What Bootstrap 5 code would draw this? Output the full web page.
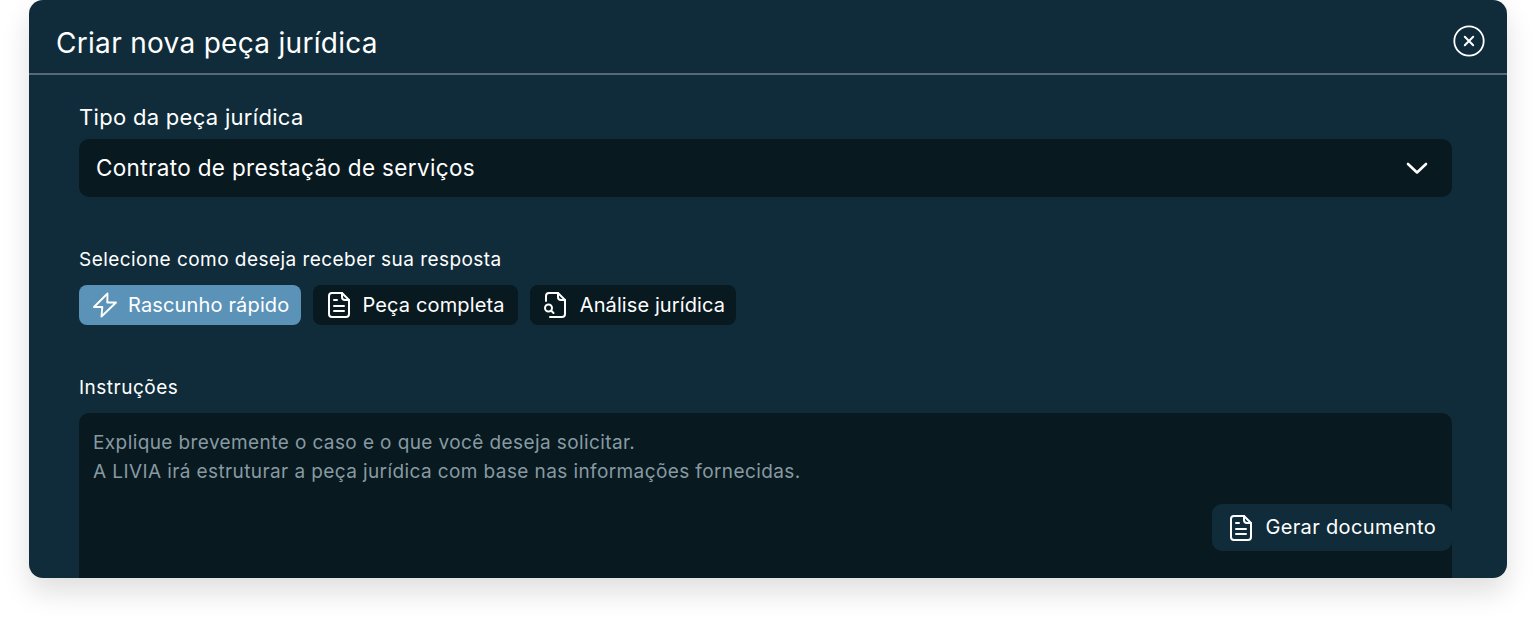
<!DOCTYPE html>
<html lang="pt-BR">
<head>
<meta charset="utf-8">
<title>Criar nova peça jurídica</title>
<link href="https://cdn.jsdelivr.net/npm/bootstrap@5.3.0/dist/css/bootstrap.min.css" rel="stylesheet">
<style>
html,body{height:636px;overflow:hidden;background:#fff;}
body{font-family:Inter,"Liberation Sans",sans-serif;padding:0 29px;}
.sheet{height:578px;background:#102c3a;border-radius:14px;color:#fff;overflow:hidden;box-shadow:0 14px 28px rgba(0,0,0,.13);}
.sheet-head{height:75px;flex:none;padding:14px 22px 0 27px;border-bottom:2px solid #56697a;}
.sheet-title{font-size:28px;font-weight:400;margin:0;letter-spacing:.3px;}
.closer{width:32px;height:32px;padding:0;background:none;border:0;display:block;margin-bottom:6px;}
.sheet-main{padding:0 55px 0 50px;}
.lbl-a{font-size:22px;letter-spacing:.3px;line-height:28px;margin:28px 0 8px;}
.picker{height:58px;background:#08191f;border-radius:10px;padding:0 24px 0 17px;font-size:22.5px;letter-spacing:.34px;}
.lbl-b{font-size:19px;letter-spacing:.45px;line-height:24px;margin:51px 0 13px;}
.chips{gap:11.5px;}
.chip{height:40px;border-radius:8px;background:#08191f;border:0;color:#fff;font-size:20px;letter-spacing:.15px;padding:0 12px 0 13px;gap:10px;}
.chip.on{background:#5b92b7;}
.chip-b{padding:0 13.5px 0 14px;gap:11.5px;}
.chip-c{gap:13px;padding-right:11px;letter-spacing:.1px;}
.lbl-c{font-size:19px;letter-spacing:.5px;line-height:24px;margin:51px 0 13px;}
.notes{height:200px;background:#08191f;border-radius:10px 10px 0 0;padding:15px 14px;font-size:19px;letter-spacing:.4px;line-height:29px;color:#879aa3;}
.gen{right:0;top:91px;height:47px;background:#102c3a;border:0;border-radius:10px;color:#fff;font-size:20px;letter-spacing:.35px;padding:0 16px 0 17px;gap:12px;}
</style>
</head>
<body>
<div class="sheet d-flex flex-column">
  <div class="sheet-head d-flex align-items-center justify-content-between">
    <h1 class="sheet-title">Criar nova peça jurídica</h1>
    <button class="closer" aria-label="Fechar"><svg width="32" height="32" viewBox="0 0 32 32" fill="none" stroke="#fff"><circle cx="16" cy="16" r="14.7" stroke-width="1.8"/><path d="M11.800 11.800l8.400 8.400M20.200 11.800l-8.400 8.400" stroke-width="2" stroke-linecap="round"/></svg></button>
  </div>
  <div class="sheet-main">
    <div class="lbl-a">Tipo da peça jurídica</div>
    <div class="picker d-flex align-items-center justify-content-between">
      <span>Contrato de prestação de serviços</span>
      <svg width="22" height="14" viewBox="0 0 22 14" fill="none" stroke="#fff" stroke-width="2.6" stroke-linecap="round" stroke-linejoin="round"><path d="M2 3l9 8.500L20 3"/></svg>
    </div>
    <div class="lbl-b">Selecione como deseja receber sua resposta</div>
    <div class="d-flex chips">
      <button class="chip on d-flex align-items-center">
        <svg width="26" height="26" viewBox="0 0 26 26" fill="none" stroke="#fff" stroke-width="1.9" stroke-linejoin="round"><path d="M15.500 1.500L2 15h8.300L9.500 24.500 24 10.500h-8.700z"/></svg>
        Rascunho rápido</button>
      <button class="chip chip-b d-flex align-items-center">
        <svg width="24" height="28" viewBox="0 0 24 28" fill="none" stroke="#fff" stroke-width="2" stroke-linecap="round" stroke-linejoin="round"><path d="M15 2H5a3 3 0 0 0-3 3v18a3 3 0 0 0 3 3h14a3 3 0 0 0 3-3V9z"/><path d="M15 2v4a3 3 0 0 0 3 3h4M7 9h3M7 15h10M7 20h10"/></svg>
        Peça completa</button>
      <button class="chip chip-c d-flex align-items-center">
        <svg width="24" height="28" viewBox="0 0 24 28" fill="none" stroke="#fff" stroke-width="2" stroke-linecap="round" stroke-linejoin="round"><path d="M3 10V5a3 3 0 0 1 3-3h9l7 7v14a3 3 0 0 1-3 3H7"/><path d="M15 2v4a3 3 0 0 0 3 3h4"/><circle cx="5.500" cy="17" r="3.500"/><path d="M8.300 19.800l2.200 2.200"/></svg>
        Análise jurídica</button>
    </div>
    <div class="lbl-c">Instruções</div>
    <div class="notes position-relative">
      Explique brevemente o caso e o que você deseja solicitar.<br>
      A LIVIA irá estruturar a peça jurídica com base nas informações fornecidas.
      <button class="gen position-absolute d-flex align-items-center">
        <svg width="24" height="28" viewBox="0 0 24 28" fill="none" stroke="#fff" stroke-width="2" stroke-linecap="round" stroke-linejoin="round"><path d="M15 2H5a3 3 0 0 0-3 3v18a3 3 0 0 0 3 3h14a3 3 0 0 0 3-3V9z"/><path d="M15 2v4a3 3 0 0 0 3 3h4M7 9h3M7 15h10M7 20h10"/></svg>
        Gerar documento</button>
    </div>
  </div>
</div>
</body>
</html>
